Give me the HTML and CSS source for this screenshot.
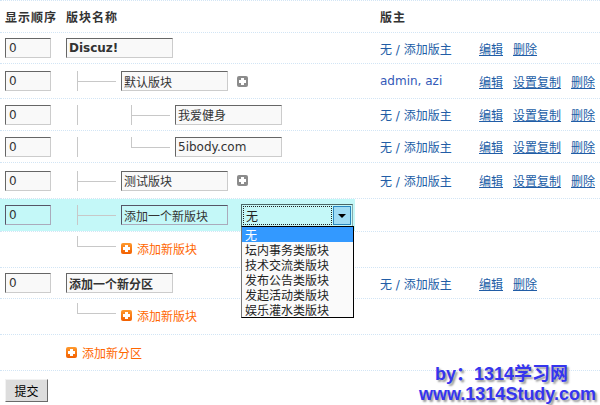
FILE: index.html
```html
<!DOCTYPE html>
<html lang="zh-CN">
<head>
<meta charset="utf-8">
<title>版块管理</title>
<link rel="stylesheet" href="styles.css">
</head>
<body>
<div class="list">
  <div class="row head h32">
    <div class="c1">显示顺序</div>
    <div class="c2">版块名称</div>
    <div class="c3">版主</div>
    <div class="c4"></div>
  </div>

  <div class="row h31">
    <div class="c1"><input class="txt ord" value="0"></div>
    <div class="c2"><input class="txt name bold" value="Discuz!"></div>
    <div class="c3"><a href="#">无 / 添加版主</a></div>
    <div class="c4"><a class="act" href="#">编辑</a><a class="act" href="#">删除</a></div>
  </div>

  <div class="row h35">
    <div class="c1"><input class="txt ord" value="0"></div>
    <div class="c2 tree"><span class="tee"></span><input class="txt name" value="默认版块"><svg class="plus gray" viewBox="0 0 11 11"><rect width="11" height="11" rx="2" fill="#8c8c8c"/><rect x="2" y="4" width="7" height="3" fill="#fff"/><rect x="4" y="2" width="3" height="7" fill="#fff"/></svg></div>
    <div class="c3"><a class="mod" href="#">admin, azi</a></div>
    <div class="c4"><a class="act" href="#">编辑</a><a class="act" href="#">设置复制</a><a class="act" href="#">删除</a></div>
  </div>

  <div class="row h32">
    <div class="c1"><input class="txt ord" value="0"></div>
    <div class="c2 tree"><span class="pipe"></span><span class="tee"></span><input class="txt name" value="我爱健身"></div>
    <div class="c3"><a href="#">无 / 添加版主</a></div>
    <div class="c4"><a class="act" href="#">编辑</a><a class="act" href="#">设置复制</a><a class="act" href="#">删除</a></div>
  </div>

  <div class="row h32">
    <div class="c1"><input class="txt ord" value="0"></div>
    <div class="c2 tree"><span class="pipe"></span><span class="ell"></span><input class="txt name" value="5ibody.com"></div>
    <div class="c3"><a href="#">无 / 添加版主</a></div>
    <div class="c4"><a class="act" href="#">编辑</a><a class="act" href="#">设置复制</a><a class="act" href="#">删除</a></div>
  </div>

  <div class="row h36">
    <div class="c1"><input class="txt ord" value="0"></div>
    <div class="c2 tree"><span class="tee"></span><input class="txt name" value="测试版块"><svg class="plus gray" viewBox="0 0 11 11"><rect width="11" height="11" rx="2" fill="#8c8c8c"/><rect x="2" y="4" width="7" height="3" fill="#fff"/><rect x="4" y="2" width="3" height="7" fill="#fff"/></svg></div>
    <div class="c3"><a href="#">无 / 添加版主</a></div>
    <div class="c4"><a class="act" href="#">编辑</a><a class="act" href="#">设置复制</a><a class="act" href="#">删除</a></div>
  </div>

  <div class="row h33 hover">
    <div class="c1 hl"><input class="txt ord" value="0"></div>
    <div class="c2 tree hl"><span class="tee"></span><input class="txt name" value="添加一个新版块">
      <div class="sel">
        <span class="sel-val">无</span>
        <span class="sel-btn"><span class="tri"></span></span>
        <ul class="opts">
          <li class="on">无</li>
          <li>坛内事务类版块</li>
          <li>技术交流类版块</li>
          <li>发布公告类版块</li>
          <li>发起活动类版块</li>
          <li>娱乐灌水类版块</li>
        </ul>
      </div>
    </div>
    <div class="c3"></div>
    <div class="c4"></div>
  </div>

  <div class="row h36 addrow">
    <div class="c1"></div>
    <div class="c2 tree"><span class="ell"></span><a class="add" href="#"><svg class="plus" viewBox="0 0 11 11"><defs><linearGradient id="og" x1="0" y1="0" x2="0" y2="1"><stop offset="0" stop-color="#ff9a2e"/><stop offset="1" stop-color="#f25f00"/></linearGradient></defs><rect width="11" height="11" rx="2" fill="url(#og)"/><rect x="2" y="4" width="7" height="3" fill="#fff"/><rect x="4" y="2" width="3" height="7" fill="#fff"/></svg>添加新版块</a></div>
    <div class="c3"></div>
    <div class="c4"></div>
  </div>

  <div class="row h31">
    <div class="c1"><input class="txt ord" value="0"></div>
    <div class="c2"><input class="txt name bold" value="添加一个新分区"></div>
    <div class="c3"><a href="#">无 / 添加版主</a></div>
    <div class="c4"><a class="act" href="#">编辑</a><a class="act" href="#">删除</a></div>
  </div>

  <div class="row h36 addrow">
    <div class="c1"></div>
    <div class="c2 tree"><span class="ell"></span><a class="add" href="#"><svg class="plus" viewBox="0 0 11 11"><rect width="11" height="11" rx="2" fill="url(#og)"/><rect x="2" y="4" width="7" height="3" fill="#fff"/><rect x="4" y="2" width="3" height="7" fill="#fff"/></svg>添加新版块</a></div>
    <div class="c3"></div>
    <div class="c4"></div>
  </div>

  <div class="row h36">
    <div class="c1"></div>
    <div class="c2"><a class="add" href="#"><svg class="plus" viewBox="0 0 11 11"><rect width="11" height="11" rx="2" fill="url(#og)"/><rect x="2" y="4" width="7" height="3" fill="#fff"/><rect x="4" y="2" width="3" height="7" fill="#fff"/></svg>添加新分区</a></div>
    <div class="c3"></div>
    <div class="c4"></div>
  </div>
</div>

<button class="btn" type="button">提交</button>

<div class="wm">
  <div class="wm1">by：1314学习网</div>
  <div class="wm2">www.1314Study.com</div>
</div>
</body>
</html>
```

FILE: styles.css
```css
html, body {
  margin: 0;
  padding: 0;
  background: #fff;
}
body {
  font: 12px "DejaVu Sans", "Noto Sans CJK SC", sans-serif;
  color: #333;
  width: 600px;
  height: 405px;
  overflow: hidden;
}
a {
  color: #215da6;
  text-decoration: none;
}
a.act {
  text-decoration: underline;
}
a.mod {
  color: #3359b8;
}

.list {
  border-top: 1px dotted #d2e5f5;
}
.row {
  display: grid;
  grid-template-columns: 66px 289px 124px 1fr;
  border-bottom: 1px dotted #d2e5f5;
  box-sizing: border-box;
}
.h31 { height: 31px; }
.h32 { height: 32px; }
.h33 { height: 33px; }
.h35 { height: 35px; }
.h36 { height: 36px; }

.row > div {
  display: flex;
  align-items: center;
  min-width: 0;
}
.c1 { padding-left: 5px; }
.c3 { padding-left: 25px; }
.c4 { gap: 10px; white-space: nowrap; }

.head {
  font-weight: bold;
  letter-spacing: 1px;
  color: #333;
}

.hl {
  background: #c4f8f8;
}
.hover .c2 {
  overflow: visible;
}

.txt {
  box-sizing: border-box;
  height: 20px;
  margin: 0;
  padding: 0 2px;
  border: 1px solid;
  border-color: #666 #ccc #ccc #666;
  background: #f9f9f9;
  font: 12px "DejaVu Sans", "Noto Sans CJK SC", sans-serif;
  color: #333;
  outline: none;
}
.hl .txt {
  background: transparent;
  border-color: #556 #aab #aab #556;
}
.ord { width: 46px; padding-left: 3px; }
.name { width: 107px; }
.bold { font-weight: bold; }

.tree { padding-left: 11px; }
.pipe,
.tee,
.ell {
  display: inline-block;
  flex: none;
  height: 20px;
}
.pipe {
  width: 54px;
  background: linear-gradient(#c8c8c8, #c8c8c8) no-repeat 0 0 / 1px 100%;
}
.tee {
  width: 39px;
  margin-right: 5px;
  background:
    linear-gradient(#c8c8c8, #c8c8c8) no-repeat 0 0 / 1px 100%,
    linear-gradient(#c8c8c8, #c8c8c8) no-repeat 0 10px / 100% 1px;
}
.ell {
  width: 39px;
  margin-right: 5px;
  background:
    linear-gradient(#c8c8c8, #c8c8c8) no-repeat 0 0 / 1px 11px,
    linear-gradient(#c8c8c8, #c8c8c8) no-repeat 0 10px / 100% 1px;
}
.addrow > div {
  padding-bottom: 3px;
}
.addrow .ell {
  margin-top: -4px;
}

.plus {
  width: 11px;
  height: 11px;
  flex: none;
}
.plus.gray {
  margin-left: 9px;
}
.add {
  display: inline-flex;
  align-items: center;
  gap: 5px;
  color: #f60;
  font-family: "Noto Sans CJK SC", sans-serif;
}

/* select (open) */
.sel {
  position: relative;
  margin-left: 13px;
  width: 112px;
  height: 23px;
  box-sizing: border-box;
  border: 1px solid;
  border-color: #4a6666 #8aa #8aa #4a6666;
  padding: 1px;
  display: flex;
  align-items: stretch;
  gap: 1px;
  flex: none;
}
.sel-val {
  flex: 1;
  box-sizing: border-box;
  border: 1px dotted #222;
  padding-left: 2px;
  line-height: 17px;
  font-family: "Noto Sans CJK SC", sans-serif;
  color: #222;
}
.sel-btn {
  width: 18px;
  box-sizing: border-box;
  border: 1px solid #2a86bf;
  background: #9fdcf4;
  display: flex;
  align-items: center;
  justify-content: center;
}
.tri {
  width: 0;
  height: 0;
  border-left: 4px solid transparent;
  border-right: 4px solid transparent;
  border-top: 4px solid #000;
  margin-top: 1px;
}
.opts {
  position: absolute;
  left: -1px;
  top: 21px;
  width: 113px;
  box-sizing: border-box;
  margin: 0;
  padding: 0;
  list-style: none;
  border: 1px solid #000;
  border-left-color: #777;
  background: #fafafa;
  z-index: 2;
  font-family: "Noto Sans CJK SC", sans-serif;
  color: #222;
}
.opts li {
  height: 15px;
  line-height: 15px;
  padding-left: 3px;
  white-space: nowrap;
}
.opts li.on {
  background: #3399ff;
  color: #fff;
}

.btn {
  display: block;
  margin: 8px 0 0 5px;
  width: 43px;
  height: 23px;
  padding: 0;
  background: #ddd;
  border: 1px solid;
  border-color: #f2f2f2 #6a6a6a #6a6a6a #f2f2f2;
  font: 12px "Noto Sans CJK SC", sans-serif;
  color: #000;
}

.wm {
  position: absolute;
  left: 419px;
  top: 364px;
  font: bold 18px "Liberation Sans", "Noto Sans CJK SC", sans-serif;
  line-height: 20px;
  color: #3535ee;
  text-shadow: 2px 2px 2px #9a9a9a;
  white-space: nowrap;
}
.wm1 {
  padding-left: 16px;
}
```
